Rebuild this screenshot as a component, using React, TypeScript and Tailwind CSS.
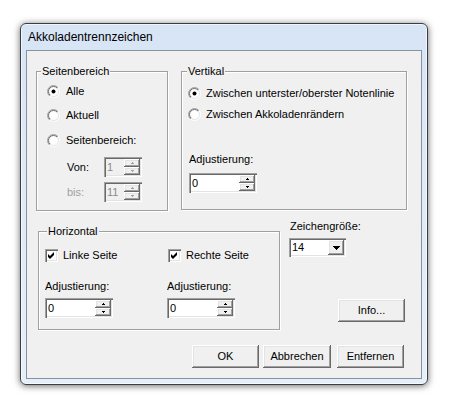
import React from "react";

const SUNKEN =
  "shadow-[inset_1px_1px_0_#a0a0a0,inset_2px_2px_0_#696969,inset_-1px_-1px_0_#ffffff,inset_-2px_-2px_0_#e3e3e3]";
const RAISED =
  "shadow-[inset_-1px_-1px_0_#696969,inset_1px_1px_0_#ffffff,inset_-2px_-2px_0_#a0a0a0,inset_2px_2px_0_#e3e3e3]";

function Radio({ checked }: { checked?: boolean }) {
  return (
    <svg width="13" height="13" viewBox="0 0 13 13" className="shrink-0">
      <defs>
        <linearGradient id="rgo" x1="0" y1="0" x2="1" y2="1">
          <stop offset="0.5" stopColor="#a0a0a0" />
          <stop offset="0.5" stopColor="#ffffff" />
        </linearGradient>
        <linearGradient id="rgi" x1="0" y1="0" x2="1" y2="1">
          <stop offset="0.5" stopColor="#696969" />
          <stop offset="0.5" stopColor="#e3e3e3" />
        </linearGradient>
      </defs>
      <circle cx="6.5" cy="6.5" r="6" fill="none" stroke="url(#rgo)" />
      <circle cx="6.5" cy="6.5" r="5" fill="#ffffff" stroke="url(#rgi)" />
      {checked && <circle cx="6.5" cy="6.5" r="2" fill="#000000" />}
    </svg>
  );
}

function Check() {
  return (
    <span className={`relative block w-[13px] h-[13px] shrink-0 bg-white ${SUNKEN}`}>
      <svg width="13" height="13" viewBox="0 0 13 13" className="absolute left-0 top-0">
        <polygon points="3,5 5,7 9,3 9,6 5,10 3,8" fill="#000000" />
      </svg>
    </span>
  );
}

function Arrow({ up, color }: { up?: boolean; color: string }) {
  return (
    <svg width="3" height="2" viewBox="0 0 3 2" shapeRendering="crispEdges">
      {up ? (
        <>
          <rect x="1" y="0" width="1" height="1" fill={color} />
          <rect x="0" y="1" width="3" height="1" fill={color} />
        </>
      ) : (
        <>
          <rect x="0" y="0" width="3" height="1" fill={color} />
          <rect x="1" y="1" width="1" height="1" fill={color} />
        </>
      )}
    </svg>
  );
}

function SpinEdit({
  value,
  className,
  disabled,
}: {
  value: string;
  className: string;
  disabled?: boolean;
}) {
  const arrow = disabled ? "#a0a0a0" : "#000000";
  return (
    <div
      className={`flex h-[20px] box-border p-[2px] ${SUNKEN} ${
        disabled ? "bg-[#f0f0f0] text-[#8a8a8a]" : "bg-white text-black"
      } ${className}`}
    >
      <div className="flex-1 flex items-center pl-[1px]">{value}</div>
      <div className="w-[16px] flex flex-col">
        <div className={`flex-1 flex items-center justify-center bg-[#f0f0f0] ${RAISED}`}>
          <Arrow up color={arrow} />
        </div>
        <div className={`flex-1 flex items-center justify-center bg-[#f0f0f0] ${RAISED}`}>
          <Arrow color={arrow} />
        </div>
      </div>
    </div>
  );
}

function Group({
  label,
  labelPos,
  className,
  children,
}: {
  label: string;
  labelPos: string;
  className: string;
  children: React.ReactNode;
}) {
  return (
    <div
      className={`relative box-border border border-[#a0a0a0] shadow-[1px_1px_0_#ffffff,inset_1px_1px_0_#ffffff] ${className}`}
    >
      <span className={`absolute top-[-7px] ${labelPos} px-[1px] bg-[#f0f0f0] leading-[13px]`}>
        {label}
      </span>
      {children}
    </div>
  );
}

function Btn({ children, className }: { children: React.ReactNode; className: string }) {
  return (
    <div
      className={`h-[23px] flex items-center justify-center bg-[#f0f0f0] ${RAISED} ${className}`}
    >
      {children}
    </div>
  );
}

function RadioRow({
  checked,
  label,
  gap,
  className,
}: {
  checked?: boolean;
  label: string;
  gap: string;
  className?: string;
}) {
  return (
    <div className={`flex items-center h-[13px] ${className ?? ""}`}>
      <Radio checked={checked} />
      <span className={gap}>{label}</span>
    </div>
  );
}

export default function App() {
  return (
    <div className="w-[459px] h-[414px] bg-white pt-[23px] pl-[20px] font-['Liberation_Sans',Arial,sans-serif]">
      <div className="w-[408px] h-[362px] box-border rounded-[6px] border border-[#3a3d42] bg-[linear-gradient(180deg,#d6e4f5_0%,#dfeaf8_40%,#e6eff9_100%)] shadow-[inset_0_0_0_1px_rgba(255,255,255,0.65),0_1px_7px_rgba(0,0,0,0.6)] flex flex-col">
        <div className="h-[26px] pl-[7px] pb-[1px] flex items-center text-[12px] text-black">
          Akkoladentrennzeichen
        </div>
        <div className="mx-[5px] h-[329px] box-border border border-[#8592a2] bg-[#f0f0f0] text-[11px] leading-[13px] text-black">
          {/* Row 1 */}
          <div className="flex mt-[20px] ml-[9px]">
            <Group label="Seitenbereich" labelPos="left-[4px]" className="w-[132px] h-[140px] pt-[13px] pl-[10px]">
              <RadioRow checked label="Alle" gap="ml-[6px]" />
              <RadioRow label="Aktuell" gap="ml-[6px]" className="mt-[11px]" />
              <RadioRow label="Seitenbereich:" gap="ml-[6px]" className="mt-[12px]" />
              <div className="flex items-center mt-[10px] ml-[20px]">
                <span className="w-[37px]">Von:</span>
                <SpinEdit value="1" className="w-[38px]" disabled />
              </div>
              <div className="flex items-center mt-[5px] ml-[20px]">
                <span className="w-[37px] text-[#a0a0a0]">bis:</span>
                <SpinEdit value="11" className="w-[38px]" disabled />
              </div>
            </Group>
            <Group label="Vertikal" labelPos="left-[5px]" className="ml-[13px] w-[226px] h-[139px] pt-[15px] pl-[6px]">
              <RadioRow checked label="Zwischen unterster/oberster Notenlinie" gap="ml-[5px]" />
              <RadioRow label="Zwischen Akkoladenrändern" gap="ml-[5px]" className="mt-[8px]" />
              <div className="mt-[32px] ml-[1px]">Adjustierung:</div>
              <SpinEdit value="0" className="mt-[7px] ml-[1px] w-[68px]" />
            </Group>
          </div>

          {/* Row 2 */}
          <div className="flex items-start mt-[9px] ml-[11px]">
            <Group label="Horizontal" labelPos="left-[8px]" className="mt-[11px] w-[242px] h-[99px] pt-[17px] pl-[6px]">
              <div className="flex">
                <div className="w-[122px] flex flex-col">
                  <div className="flex items-center h-[13px]">
                    <Check />
                    <span className="ml-[5px]">Linke Seite</span>
                  </div>
                  <div className="mt-[18px]">Adjustierung:</div>
                  <SpinEdit value="0" className="mt-[5px] w-[68px]" />
                </div>
                <div className="flex flex-col">
                  <div className="flex items-center h-[13px] ml-[1px]">
                    <Check />
                    <span className="ml-[5px]">Rechte Seite</span>
                  </div>
                  <div className="mt-[18px]">Adjustierung:</div>
                  <SpinEdit value="0" className="mt-[5px] w-[68px]" />
                </div>
              </div>
            </Group>
            <div className="ml-[9px] flex flex-col">
              <div className="pl-[1px]">Zeichengröße:</div>
              <div className={`mt-[5px] w-[57px] h-[19px] box-border p-[2px] flex bg-white ${SUNKEN}`}>
                <div className="flex-1 flex items-center pl-[1px]">14</div>
                <div className={`w-[16px] flex items-center justify-center bg-[#f0f0f0] ${RAISED}`}>
                  <svg width="7" height="4" viewBox="0 0 7 4" shapeRendering="crispEdges">
                    <rect x="0" y="0" width="7" height="1" fill="#000" />
                    <rect x="1" y="1" width="5" height="1" fill="#000" />
                    <rect x="2" y="2" width="3" height="1" fill="#000" />
                    <rect x="3" y="3" width="1" height="1" fill="#000" />
                  </svg>
                </div>
              </div>
              <Btn className="mt-[42px] ml-[49px] w-[67px]">Info...</Btn>
            </div>
          </div>

          {/* Row 3 */}
          <div className="flex mt-[15px] ml-[165px]">
            <Btn className="w-[67px]">OK</Btn>
            <Btn className="ml-[4px] w-[68px]">Abbrechen</Btn>
            <Btn className="ml-[6px] w-[67px]">Entfernen</Btn>
          </div>
        </div>
      </div>
    </div>
  );
}
